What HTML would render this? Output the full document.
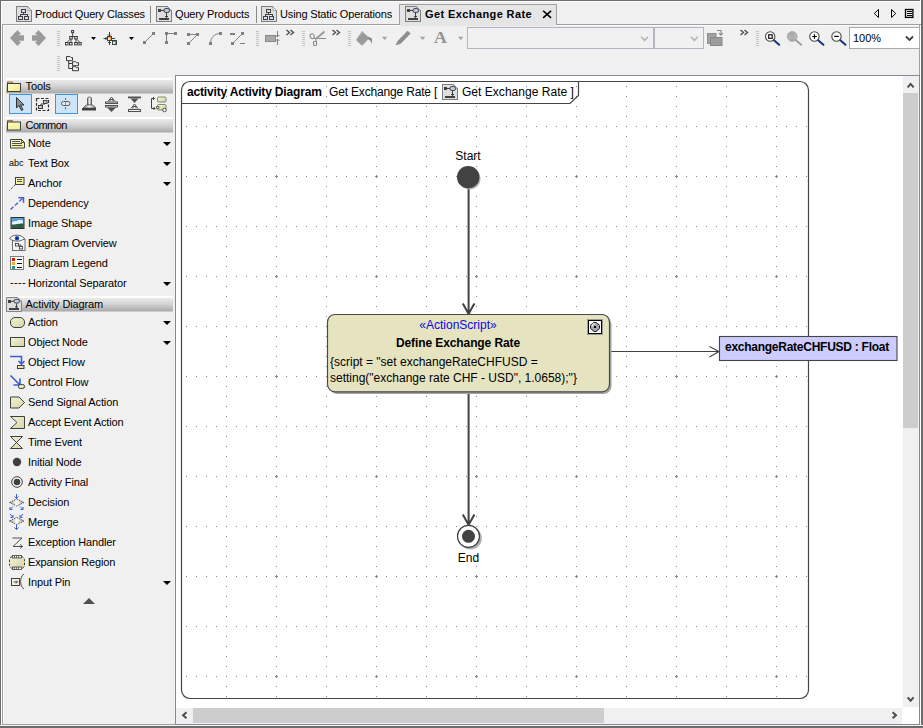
<!DOCTYPE html>
<html><head><meta charset="utf-8"><title>Get Exchange Rate</title>
<style>
*{box-sizing:border-box;margin:0;padding:0}
html,body{width:923px;height:728px;overflow:hidden;background:#f0f0f0}
body{position:relative;font-family:"Liberation Sans",sans-serif;font-size:11.5px;color:#000}
.a{position:absolute}
.t{position:absolute;white-space:nowrap;line-height:14px;height:14px}
svg{position:absolute;overflow:visible}
/* window borders */
#bt{left:0;top:0;width:923px;height:2px;background:#fff;border-top:1px solid #6e6e6e}
#bl{left:0;top:1px;width:2px;height:728px;background:#fff;border-left:1px solid #6e6e6e}
#br{left:920px;top:0;width:3px;height:728px;background:#6c6c6c;border-left:1px solid #fff}
#bb{left:0;top:725px;width:923px;height:3px;background:#6c6c6c;border-top:1px solid #f4f4f4}
#tabline{left:2px;top:24px;width:919px;height:1px;background:#a0a0a0}
#paneL{left:2px;top:24px;width:1px;height:701px;background:#a0a0a0}
#paneR{left:919px;top:24px;width:1px;height:701px;background:#a0a0a0}
#hiT{left:3px;top:25px;width:916px;height:1px;background:#fbfbfb}
#hiL{left:3px;top:25px;width:1px;height:699px;background:#fbfbfb}
#paneB{left:2px;top:724px;width:918px;height:1px;background:#a0a0a0}
/* tabs */
.tab{top:7px;font-size:11px;letter-spacing:-0.15px}
#atab{left:399px;top:4px;width:158px;height:21px;border:1px solid #a0a0a0;border-bottom:none;background:#e5e5e5}
.sep{top:6px;width:1px;height:17px;background:#8a8a8a}
/* palette */
.hdr{left:6px;width:167px;height:16px;background:linear-gradient(#ffffff 0,#ffffff 1.8px,#e9e9e9 2.2px,#d4d4d4 8px,#a9a9a9 15.4px,#f0f0f0 15.6px)}
.row{left:28px;font-size:11px;letter-spacing:-0.12px}
.dd{left:163px;width:0;height:0;border-left:4px solid transparent;border-right:4px solid transparent;border-top:4px solid #000}
.sel{background:#cce4f7;border:1px solid #3c96e0}
/* canvas */
#canvas{left:175px;top:75px;width:745px;height:650px;background:#fff;border:1px solid #828a96}
</style></head><body>
<div class="a" id="bt"></div><div class="a" id="bl"></div><div class="a" id="br"></div><div class="a" id="bb"></div>
<div class="a" id="tabline"></div><div class="a" id="paneL"></div><div class="a" id="paneR"></div><div class="a" id="paneB"></div><div class="a" id="hiT"></div><div class="a" id="hiL"></div>

<!-- TABS -->
<div class="a" id="atab"></div><div class="a" style="left:400px;top:25px;width:156px;height:1px;background:#e5e5e5"></div>
<div class="t tab" style="left:35px">Product Query Classes</div>
<div class="a sep" style="left:150px"></div>
<div class="t tab" style="left:175px">Query Products</div>
<div class="a sep" style="left:256px"></div>
<div class="t tab" style="left:280px">Using Static Operations</div>
<div class="t tab" style="left:425px;font-weight:bold;letter-spacing:0.4px">Get Exchange Rate</div>
<svg class="a" style="left:0;top:0" width="0" height="0"><defs>
<g id="icls" shape-rendering="crispEdges">
<path d="M0.500 0.500h11l4 4v11h-15z" fill="#dedede" stroke="#7e7e7e"/>
<path d="M12 1v3.500h3.500z" fill="#fff" stroke="#7e7e7e" stroke-width="0.600" shape-rendering="auto"/>
<path d="M7.500 7v2M4.500 10v-1.500h6.500v1.500" fill="none" stroke="#404040"/>
<rect x="5.500" y="3.500" width="4" height="3" fill="#d0dcf8" stroke="#404040"/>
<rect x="2.500" y="10.500" width="4" height="3" fill="#d0dcf8" stroke="#404040"/>
<rect x="8.500" y="10.500" width="4" height="3" fill="#d0dcf8" stroke="#404040"/>
</g>
<g id="iact" shape-rendering="crispEdges">
<path d="M0.500 0.500h11l4 4v11h-15z" fill="#dedede" stroke="#7e7e7e"/>
<path d="M12 1v3.500h3.500z" fill="#fff" stroke="#7e7e7e" stroke-width="0.600" shape-rendering="auto"/>
<rect x="2" y="3" width="3" height="3" fill="#404040"/>
<path d="M5 4.500h3M10.500 7v5M9 10.500h3" stroke="#404040" fill="none"/>
<rect x="3" y="12" width="10" height="2" fill="#404040"/>
<rect x="8" y="2.500" width="5.500" height="4" rx="1.800" fill="#b8c8ee" stroke="#404040" shape-rendering="auto"/>
</g>
</defs></svg>
<svg class="a" style="left:16px;top:6px" width="16" height="16"><use href="#icls"/></svg>
<svg class="a" style="left:156px;top:6px" width="16" height="16"><use href="#iact"/></svg>
<svg class="a" style="left:261px;top:6px" width="16" height="16"><use href="#icls"/></svg>
<svg class="a" style="left:405px;top:6px" width="16" height="16"><use href="#iact"/></svg>


<!-- TOOLBAR -->
<svg class="a" style="left:0;top:0" width="923" height="76" viewBox="0 0 923 76" shape-rendering="crispEdges">
<defs>
<g id="grip" fill="#c4c4c4"><rect x="0" y="0" width="3" height="1"/><rect x="0" y="2" width="3" height="1"/><rect x="0" y="4" width="3" height="1"/><rect x="0" y="6" width="3" height="1"/><rect x="0" y="8" width="3" height="1"/><rect x="0" y="10" width="3" height="1"/><rect x="0" y="12" width="3" height="1"/><rect x="0" y="14" width="3" height="1"/></g>
<path id="dda" d="M0 0h5l-2.500 3z"/><path id="ddg" d="M0 0h5.400l-2.700 3.300z" fill="#a2a2a2"/>
<path id="chev" d="M0 0l3 2.5l-3 2.5M4 0l3 2.5l-3 2.5" fill="none" stroke="#505050" stroke-width="1.400" shape-rendering="auto"/>
<g id="mag" shape-rendering="auto"><path d="M9.200 9.300l5.800 5" stroke="#143480" stroke-width="2" stroke-linecap="round"/><circle cx="6" cy="6" r="4.700" fill="#fdfdfd" stroke="#4a4a4a" stroke-width="1.100"/></g>
</defs>
<!-- back / forward -->
<g fill="#9a9a9a" shape-rendering="auto">
<path d="M10 38l7.500-8l3.500 3.700l-2.500 1.600h5.500v5.400h-5.500l2.500 1.600l-3.500 3.700z"/>
<path d="M46 38l-7.500-8l-3.500 3.700l2.500 1.600h-5.500v5.400h5.500l-2.500 1.600l3.500 3.700z"/>
</g>
<use href="#grip" x="57" y="31"/>
<use href="#grip" x="57" y="56"/>
<use href="#grip" x="256" y="31"/>
<use href="#grip" x="302" y="31"/>
<use href="#grip" x="348" y="31"/>
<use href="#grip" x="756" y="31"/>
<!-- tree layout icon -->
<g fill="#f0f0f0" stroke="#3a3a3a" stroke-width="1" shape-rendering="auto">
<path d="M72.600 33v3.500M71 36.500h5M70 39.500l-3 3M77 39.500l3 3M71 39v3.500M76 39v3.500" fill="none" stroke-width="0.900"/>
<rect x="71.600" y="30.500" width="2" height="2.200"/>
<rect x="69.700" y="36.500" width="2.600" height="2.500"/><rect x="74.700" y="36.500" width="2.600" height="2.500"/>
<rect x="65.500" y="42.500" width="2.500" height="2.400"/><rect x="69.500" y="42.500" width="2.600" height="2.400"/><rect x="74.700" y="42.500" width="2.600" height="2.400"/><rect x="78.900" y="42.500" width="2.300" height="2.400"/>
</g>
<use href="#dda" x="91" y="37" fill="#000" shape-rendering="auto"/>
<!-- align icon -->
<g stroke="#404040" stroke-width="1" fill="none">
<path d="M109.500 32v4.500M108 34.500l1.500 1.500l1.500-1.500M109.500 45v-4M108 43l1.500-1.500l1.500 1.500M103.500 38.500h4M105.500 37l1.500 1.500l-1.500 1.500M112 38.500h3" shape-rendering="auto"/>
<rect x="107.500" y="36.500" width="4" height="4" fill="#f0a040"/>
<rect x="112.500" y="40.500" width="4" height="4" fill="#40b060"/>
</g>
<rect x="108" y="38" width="2" height="2" fill="#fde8c8"/><rect x="113" y="42" width="2" height="2" fill="#e0f5e4"/>
<use href="#dda" x="129" y="37" fill="#000" shape-rendering="auto"/>
<!-- path style icons -->
<g fill="#808080" stroke="none">
<rect x="143" y="41" width="3" height="3"/><rect x="152" y="32" width="3" height="3"/>
<rect x="165" y="32" width="3" height="3"/><rect x="174" y="32" width="3" height="3"/><rect x="165" y="41" width="3" height="3"/>
<rect x="187" y="33" width="3" height="3"/><rect x="196" y="33" width="3" height="3"/><rect x="187" y="42" width="3" height="3"/>
<rect x="209" y="42" width="3" height="3"/><rect x="219" y="32" width="3" height="3"/>
<rect x="230" y="33" width="5" height="1.500"/><rect x="241" y="32" width="3" height="3"/><rect x="231" y="42" width="3" height="3"/><rect x="240" y="42.500" width="5" height="1.500"/>
</g>
<g stroke="#808080" stroke-width="1" fill="none" shape-rendering="auto">
<path d="M144.500 42.500l9-9M166.500 42.500v-9h9M188.500 34.500h9l-9 9M210.500 43.500c0-6 4-10 10-10M232.500 43.500l10-10"/>
</g>
<!-- resize rect icon -->
<rect x="265.500" y="35.500" width="10" height="6" fill="#a8a8a8" stroke="#8a8a8a"/>
<g stroke="#808080" fill="none" shape-rendering="auto"><path d="M277.500 31v6M275.500 35l2 2l2-2M277.500 45v-6M275.500 41l2-2l2 2"/></g>
<use href="#chev" x="286.500" y="30"/>
<!-- scissors -->
<g stroke="#8a8a8a" fill="none" stroke-width="1.100" shape-rendering="auto">
<ellipse cx="312.200" cy="36.200" rx="2" ry="2.500" transform="rotate(-25 312.200 36.200)"/>
<rect x="313.500" y="41.500" width="3" height="4" rx="0.800"/>
<path d="M314 38.200l2 0.400v3M316 38.500h10"/>
<path d="M316.300 38.500l8.200-7" stroke="#9c9c9c" stroke-width="2"/>
</g>
<use href="#chev" x="332.500" y="30"/>
<!-- bucket -->
<g shape-rendering="auto">
<path d="M362 31.300l7.500 6.700l-7.500 7.800l-6-5.800z" fill="#9a9a9a"/>
<path d="M361 34.500c-0.500-3.500 2-3.500 2.500-1.500" fill="none" stroke="#c4c4c4" stroke-width="1.100"/>
<path d="M368 36.500l4 2v5.500l-1.800-3.500l-2-1z" fill="#8c8c8c"/>
</g>
<use href="#ddg" x="381.900" y="36.700" shape-rendering="auto"/>
<!-- pencil -->
<g shape-rendering="auto"><path d="M396.200 44.800l1.800-3.800l9.600-10l2.600 2.600l-9.600 9.800z" fill="#8e8e8e" stroke="#808080" stroke-width="0.600"/></g>
<use href="#ddg" x="419.900" y="36.700" shape-rendering="auto"/>
<text x="0" y="0" transform="translate(433.800 42.800) scale(1.150 1)" font-family="Liberation Serif,serif" font-size="16" font-weight="bold" fill="#949494" shape-rendering="auto">A</text>
<use href="#ddg" x="458" y="36.700" shape-rendering="auto"/>
<!-- combos -->
<rect x="467.500" y="27.500" width="186" height="21" fill="#f1f1f1" stroke="#b2b6c0"/>
<rect x="654.500" y="27.500" width="49" height="21" fill="#f1f1f1" stroke="#b2b6c0"/>
<g stroke="#b4b4b4" stroke-width="1.600" fill="none" shape-rendering="auto"><path d="M641.200 36.800l3.400 3.800l3.400-3.800M691 36.800l3.400 3.800l3.400-3.800"/></g>
<!-- copy icon -->
<g shape-rendering="auto"><rect x="707.500" y="33.500" width="8.500" height="10" fill="#a2a2a2" stroke="#8e8e8e"/><rect x="710.500" y="37.500" width="11.500" height="8" fill="#9c9c9c" stroke="#888"/>
<path d="M717 30.500h4v4.500M719 33l2 2.200l2-2.200" fill="none" stroke="#8a8a8a" stroke-width="1.100"/></g>
<use href="#chev" x="740.500" y="30"/>
<!-- zoom icons -->
<use href="#mag" x="764.200" y="30.500"/>
<rect x="768.700" y="34.800" width="3.500" height="3.500" fill="none" stroke="#000" stroke-width="1.100" shape-rendering="auto"/>
<g shape-rendering="auto"><path d="M795.400 39.800l5.800 5" stroke="#a0a0a0" stroke-width="2" stroke-linecap="round"/><circle cx="792.200" cy="36.500" r="4.900" fill="#aaaaaa" stroke="#a4a4a4" stroke-width="0.800"/><text x="792.200" y="38.800" text-anchor="middle" font-family="Liberation Sans,sans-serif" font-size="6" font-weight="bold" fill="#c4c4c4">1:1</text></g>
<use href="#mag" x="808.400" y="30.500"/>
<path d="M812.200 36.500h4.500M814.450 34.300v4.500" stroke="#000" stroke-width="1.200" fill="none" shape-rendering="auto"/>
<use href="#mag" x="830.500" y="30.500"/>
<path d="M834.300 36.400h4.500" stroke="#000" stroke-width="1.200" fill="none" shape-rendering="auto"/>
<!-- zoom combo -->
<rect x="849.500" y="27.500" width="70" height="21" fill="#fff" stroke="#a9a9a9"/>
<path d="M906 36.500l3.500 3.500l3.500-3.500" stroke="#404040" stroke-width="1.800" fill="none" shape-rendering="auto"/>
<!-- hierarchy icon row 2 -->
<g fill="#f0f0f0" stroke="#3a3a3a" shape-rendering="auto"><path d="M68.700 60.500v8h3.800M68.700 63.500h3.800" fill="none"/>
<path d="M66.500 56.500h3.500l1 1h1.500v3.200h-6z"/><path d="M72.500 61.700h3l1 1h2v3h-6z"/><path d="M72.500 66.700h3l1 1h2v3h-6z"/></g>
<!-- tab nav icons -->
<g shape-rendering="auto" fill="none" stroke="#000" stroke-width="1"><path d="M878.500 9.500l-4.200 4l4.200 4zM891.500 9.500l4.200 4l-4.200 4z"/><rect x="905.500" y="9.500" width="7.400" height="7.900" stroke-width="1.300"/></g>
<g shape-rendering="crispEdges" fill="#000"><rect x="907" y="11" width="5" height="1"/><rect x="907" y="13" width="5" height="1"/><rect x="907" y="15" width="5" height="1"/></g>
<!-- close x -->
<path d="M543.700 11.300l6.800 6M550.500 11.300l-6.800 6" stroke="#000" stroke-width="1.600" stroke-linecap="square" fill="none" shape-rendering="auto"/>
</svg>
<div class="t" style="left:853px;top:31px;font-size:11px">100%</div>


<!-- PALETTE -->
<div class="a hdr" style="top:78px"></div>
<div class="a hdr" style="top:117px"></div>
<div class="a hdr" style="top:296px"></div>
<div class="t row" style="left:25.500px;top:79px">Tools</div>
<div class="t row" style="left:25.500px;top:118px;letter-spacing:-0.55px">Common</div>
<div class="t row" style="left:25.600px;top:297px">Activity Diagram</div>
<div class="a sel" style="left:9px;top:94px;width:23px;height:20px"></div>
<div class="a sel" style="left:55px;top:94px;width:23px;height:20px"></div>
<div class="t row" style="top:136px">Note</div>
<div class="t row" style="top:156px">Text Box</div>
<div class="t row" style="top:176px">Anchor</div>
<div class="t row" style="top:196px">Dependency</div>
<div class="t row" style="top:216px">Image Shape</div>
<div class="t row" style="top:236px">Diagram Overview</div>
<div class="t row" style="top:256px">Diagram Legend</div>
<div class="t row" style="top:276px">Horizontal Separator</div>
<div class="t row" style="top:315px">Action</div>
<div class="t row" style="top:335px">Object Node</div>
<div class="t row" style="top:355px">Object Flow</div>
<div class="t row" style="top:375px">Control Flow</div>
<div class="t row" style="top:395px">Send Signal Action</div>
<div class="t row" style="top:415px">Accept Event Action</div>
<div class="t row" style="top:435px">Time Event</div>
<div class="t row" style="top:455px">Initial Node</div>
<div class="t row" style="top:475px">Activity Final</div>
<div class="t row" style="top:495px">Decision</div>
<div class="t row" style="top:515px">Merge</div>
<div class="t row" style="top:535px">Exception Handler</div>
<div class="t row" style="top:555px">Expansion Region</div>
<div class="t row" style="top:575px">Input Pin</div>
<div class="t row" style="left:9px;top:156px;font-size:9px;letter-spacing:0">abc</div>
<div class="t row" style="left:10px;top:275px;font-size:11px;letter-spacing:0.3px">----</div>
<div class="a dd" style="top:142px"></div>
<div class="a dd" style="top:162px"></div>
<div class="a dd" style="top:182px"></div>
<div class="a dd" style="top:282px"></div>
<div class="a dd" style="top:321px"></div>
<div class="a dd" style="top:341px"></div>
<div class="a dd" style="top:581px"></div>
<div class="a" style="left:83px;top:598px;width:0;height:0;border-left:6px solid transparent;border-right:6px solid transparent;border-bottom:6px solid #505050"></div>
<svg class="a" style="left:0;top:0" width="176" height="620" viewBox="0 0 176 620">
<defs>
<linearGradient id="gy" x1="0" y1="0" x2="1" y2="1"><stop offset="0" stop-color="#ffffc0"/><stop offset="1" stop-color="#f0e890"/></linearGradient>
<linearGradient id="gk" x1="0" y1="0" x2="1" y2="1"><stop offset="0" stop-color="#f4f4d8"/><stop offset="1" stop-color="#d4d4a4"/></linearGradient>
<linearGradient id="gg" x1="0" y1="0" x2="1" y2="0"><stop offset="0" stop-color="#707070"/><stop offset="0.500" stop-color="#f4f4f4"/><stop offset="1" stop-color="#707070"/></linearGradient>
<g id="folder"><path d="M0.500 2.500v-1.500h5v1.500" fill="#eab468" stroke="#806040" stroke-width="0.800"/><rect x="0.500" y="2.500" width="13" height="8" fill="url(#gy)" stroke="#404040"/></g>
</defs>
<use href="#folder" x="7" y="81"/>
<use href="#folder" x="7" y="119.500"/>
<svg x="6" y="297" width="16" height="15" viewBox="0 0 16 16" preserveAspectRatio="none"><use href="#iact"/></svg>
<!-- cursor -->
<path d="M16.500 97.500v10.500l2.500-2.500l2.500 5l1.500-0.800l-2.500-4.700h3.500z" fill="#909090" stroke="#303030" stroke-width="1" stroke-linejoin="round"/>
<!-- dashed select -->
<rect x="36.500" y="98.500" width="12" height="12" fill="none" stroke="#303030" stroke-width="1.200" stroke-dasharray="3 1.500"/>
<path d="M41 107v-3h4" fill="none" stroke="#404040"/>
<rect x="43.500" y="100.500" width="3.500" height="3" fill="#c8c8c8" stroke="#404040"/>
<rect x="38.500" y="105.500" width="4" height="3" fill="#c8c8c8" stroke="#404040"/>
<!-- sticky -->
<path d="M65.500 98v2M65.500 107v2.500" stroke="#707070" fill="none"/>
<rect x="61.500" y="101.500" width="8.500" height="4" rx="2" fill="#e8e8e8" stroke="#606060"/>
<path d="M65.500 102v3" stroke="#909090"/>
<!-- stamp -->
<path d="M87.500 98.500c0-2 4-2 4 0v6.500h-4z" fill="url(#gg)" stroke="#505050" stroke-width="0.800"/>
<path d="M83 108l3-3h7l3 3z" fill="url(#gg)" stroke="#505050" stroke-width="0.600"/>
<rect x="82" y="108" width="14" height="2.500" fill="#404040"/>
<!-- expand -->
<g stroke="#505050" fill="none"><rect x="105.500" y="102" width="12" height="1.500" fill="#f0f0f0"/><rect x="105.500" y="105.500" width="12" height="1.500" fill="#f0f0f0"/>
<path d="M108 101.500l3.500-4.500l3.500 4.500M110 101.500v-2h3v2" /></g>
<path d="M107 107.500h9l-4.500 4.500z" fill="#505050"/>
<!-- compress -->
<rect x="128" y="96.500" width="13" height="1.800" fill="#505050"/>
<path d="M130.500 98.500h8l-4 4.500z" fill="#505050"/>
<g stroke="#505050" fill="none"><path d="M131 108.500l3.500-4.500l3.500 4.500M133 108.500v-2h3v2"/><rect x="128.500" y="109.500" width="12" height="2" fill="#f0f0f0"/></g>
<!-- related elements -->
<g stroke="#404040" fill="none"><path d="M154 98.500h-2.500v10h3.500M153 97l1.500 1.500l-1.500 1.500M153.500 107l1.500 1.500l-1.500 1.500"/></g>
<rect x="157.500" y="97" width="8.500" height="5" rx="1" fill="url(#gk)" stroke="#707060" stroke-width="0.800"/>
<rect x="157.500" y="104.500" width="8.500" height="5.500" rx="1" fill="url(#gk)" stroke="#707060" stroke-width="0.800"/>
<rect x="156.500" y="106.500" width="2.500" height="2" fill="#d8d8a8" stroke="#505050" stroke-width="0.700"/>
<circle cx="164.500" cy="110" r="1.800" fill="#fff" stroke="#404040" stroke-width="0.900"/>
<!-- note -->
<path d="M10.500 139.500h11l3 3v5.500h-14z" fill="url(#gy)" stroke="#404040"/>
<path d="M21.500 139.500v3h3" stroke="#404040" fill="none" stroke-width="0.900"/><path d="M12 141.500h8M12 143.500h10M12 145.500h10" stroke="#505050" fill="none" stroke-width="1" shape-rendering="crispEdges"/>
<!-- anchor -->
<rect x="15.500" y="177.500" width="8.500" height="7" fill="url(#gy)" stroke="#404040"/>
<path d="M17 179.500h5M17 181.500h5" stroke="#505050" stroke-width="1" shape-rendering="crispEdges"/>
<path d="M15 185l-5.500 5.500" stroke="#404040" stroke-dasharray="2 1.500"/>
<!-- dependency -->
<path d="M10.500 209.500l12.500-11.500" stroke="#3c5cd8" stroke-width="1.300" stroke-dasharray="4 2" fill="none"/>
<path d="M18.500 197.700h5v5" stroke="#3c5cd8" stroke-width="1.500" fill="none"/>
<!-- image -->
<rect x="11" y="217.500" width="13" height="11" fill="#58a0d8" stroke="#303030"/>
<rect x="11.500" y="224" width="12" height="4" fill="#2c5c48"/>
<path d="M12 222.500c2-2.500 4-0.500 5-1.500s3-1.500 6-0.500v2.500c-3 0-5 1.500-11 1.500z" fill="#e8f4fc"/>
<!-- diagram overview -->
<rect x="12.500" y="239.500" width="12.500" height="11" fill="#f4f4f4" stroke="#707070"/>
<path d="M9.500 238.500c4-4.500 11-4.500 15 0c-4 3.500-11 3.500-15 0z" fill="#fff" stroke="#404040" stroke-width="0.800"/>
<circle cx="17" cy="238.300" r="2.200" fill="#1848d0"/><circle cx="17" cy="238.300" r="0.900" fill="#102060"/>
<rect x="15.500" y="243.500" width="3" height="2.500" fill="#fff" stroke="#404040" stroke-width="0.900"/><rect x="19.500" y="246.500" width="3" height="2.500" fill="#fff" stroke="#404040" stroke-width="0.900"/><path d="M18.500 245h2.500v1.500" stroke="#404040" fill="none" stroke-width="0.900"/>
<!-- legend -->
<rect x="10.500" y="256.500" width="13" height="13" fill="#f8f8f8" stroke="#808080"/>
<rect x="12" y="258" width="3" height="3" fill="#d81414"/><rect x="12" y="262" width="3" height="3" fill="#fca814"/><rect x="12" y="266" width="3" height="3" fill="#149c90"/>
<path d="M16.500 259.500h5.500M16.500 263.500h5.500M16.500 267.500h5.500" stroke="#101010" stroke-width="1" shape-rendering="crispEdges"/>
<!-- action -->
<rect x="10.500" y="317.500" width="14" height="10" rx="4.500" fill="url(#gk)" stroke="#404040"/>
<!-- object node -->
<rect x="10.500" y="337.500" width="14" height="9" fill="url(#gk)" stroke="#404040"/>
<!-- object flow -->
<path d="M10 356.500h11.500v7M18.500 361l3 3l3-3" stroke="#3c5cd8" stroke-width="1.600" fill="none"/>
<rect x="17.500" y="365.500" width="6.500" height="3" fill="url(#gk)" stroke="#404040"/>
<!-- control flow -->
<path d="M10.500 375.500l9.500 9.500M13.500 385h6.500v-6.500" stroke="#3c5cd8" stroke-width="1.600" fill="none"/>
<rect x="18.500" y="384.500" width="6" height="4" rx="1.800" fill="url(#gk)" stroke="#404040"/>
<!-- send signal -->
<path d="M10.500 397h8.500l5.500 5.500l-5.500 5.500h-8.500z" fill="url(#gk)" stroke="#404040"/>
<!-- accept event -->
<path d="M10.500 416.500h14v12h-14l6.500-6z" fill="url(#gk)" stroke="#404040"/>
<!-- time event -->
<path d="M10.500 436.500h12l-12 12h12z" fill="url(#gk)" stroke="#404040" stroke-linejoin="round"/>
<!-- initial -->
<circle cx="17" cy="462" r="4.200" fill="#404040"/>
<!-- final -->
<circle cx="17" cy="482" r="5.300" fill="#f8f8f8" stroke="#404040"/><circle cx="17" cy="482" r="3.300" fill="#404040"/>
<!-- decision -->
<defs><linearGradient id="gd" x1="0" y1="0" x2="1" y2="0"><stop offset="0" stop-color="#a0a0a0"/><stop offset="0.500" stop-color="#ffffff"/><stop offset="1" stop-color="#a0a0a0"/></linearGradient></defs>
<path d="M9.500 502.500l7.200-3.500l7.300 3.500l-7.300 3.500z" fill="url(#gd)" stroke="#404040" stroke-width="0.900" stroke-dasharray="1.600 1"/>
<g stroke="#3c5cd8" fill="none" stroke-width="1"><path d="M16.500 494v4.500M14.500 496.500l2 2l2-2M13 506.500l-3 3M10 507v2.500h2.500M20 506.500l3 3M23 507v2.500h-2.500"/></g>
<!-- merge -->
<path d="M9.500 521l7.200-3.500l7.300 3.500l-7.300 3.500z" fill="url(#gd)" stroke="#404040" stroke-width="0.900" stroke-dasharray="1.600 1"/>
<g stroke="#3c5cd8" fill="none" stroke-width="1"><path d="M16.500 525v4.500M14.500 527.500l2 2l2-2M10 514l3 3.500M10.500 517.500h2.500v-2.500M23 514l-3 3.500M22.500 517.500h-2.500v-2.500"/></g>
<!-- exception handler -->
<path d="M12.500 538h9.500l-9 8.500h9.500M20 544.500l2.500 2l-2.500 2" stroke="#404040" fill="none" stroke-width="0.900"/>
<!-- expansion region -->
<rect x="9.500" y="556.500" width="15" height="12" rx="3.500" fill="url(#gk)" stroke="#404040" stroke-dasharray="2.500 1.500"/>
<rect x="12.500" y="555.500" width="9" height="2.500" fill="#f4f4e0" stroke="#404040" stroke-width="0.800"/><rect x="12.500" y="567" width="9" height="2.500" fill="#f4f4e0" stroke="#404040" stroke-width="0.800"/>
<path d="M14.500 555.500v2.500M16.500 555.500v2.500M18.500 555.500v2.500M14.500 567v2.500M16.500 567v2.500M18.500 567v2.500" stroke="#404040" stroke-width="0.700"/>
<!-- input pin -->
<rect x="11.500" y="578.500" width="8" height="7" fill="#f4f4e0" stroke="#404040"/>
<path d="M13.500 582h4M16 580.500l1.500 1.500l-1.500 1.500" stroke="#404040" fill="none" stroke-width="0.900"/>
<path d="M24 574c-4.500 2.500-4.500 12.500 0 15" stroke="#404040" fill="none" stroke-width="0.900"/>
</svg>



<!-- CANVAS -->
<div class="a" id="canvas"></div>
<svg class="a" style="left:176px;top:76px" width="727" height="631" viewBox="176 76 727 631">
<defs>
<pattern id="grid" x="176" y="76" width="50" height="50" patternUnits="userSpaceOnUse" shape-rendering="crispEdges">
<g fill="#888888"><rect x="0" y="0" width="1" height="1"/><rect x="10" y="0" width="1" height="1"/><rect x="20" y="0" width="1" height="1"/><rect x="30" y="0" width="1" height="1"/><rect x="40" y="0" width="1" height="1"/>
<rect x="0" y="10" width="1" height="1"/><rect x="0" y="20" width="1" height="1"/><rect x="0" y="30" width="1" height="1"/><rect x="0" y="40" width="1" height="1"/></g>
</pattern>
<pattern id="plus" x="225" y="125" width="100" height="100" patternUnits="userSpaceOnUse" shape-rendering="crispEdges">
<g fill="#888888"><rect x="50" y="51" width="3" height="1"/><rect x="51" y="50" width="1" height="3"/></g>
</pattern>
<clipPath id="fclip"><rect x="182" y="82" width="626" height="616" rx="9"/></clipPath>
<linearGradient id="gact" x1="0" y1="0" x2="1" y2="0"><stop offset="0" stop-color="#e7e5c1"/><stop offset="1" stop-color="#e5e3bd"/></linearGradient>
</defs>
<g clip-path="url(#fclip)"><rect x="181" y="81" width="628" height="618" fill="url(#grid)"/><rect x="181" y="81" width="628" height="618" fill="url(#plus)"/></g>
<!-- frame -->
<rect x="181.500" y="81.500" width="627" height="617" rx="8.500" fill="none" stroke="#454545" stroke-width="1.200"/>
<path d="M181.500 103.500h388.500l8.500-8v-14" fill="none" stroke="#454545" stroke-width="1.200"/>
<svg x="442" y="84" width="16" height="16"><use href="#iact"/></svg>
<!-- flows -->
<g stroke="#424242" stroke-width="2" fill="none">
<path d="M468.600 188v126M462.800 303.500l5.800 10.500l5.800-10.500"/>
<path d="M468.600 392v132M462.800 514.500l5.800 10.500l5.800-10.500"/>
</g>
<path d="M610 351.500h108.500M709.500 346.500l9.500 5l-9.500 5.500" stroke="#424242" stroke-width="1.100" fill="none"/>
<!-- start -->
<circle cx="469.700" cy="178.700" r="10.800" fill="#b4b4b4"/>
<circle cx="468.200" cy="177.200" r="11.200" fill="#424242"/>
<!-- end -->
<circle cx="470.500" cy="538.300" r="11.300" fill="#b0b0b0"/>
<circle cx="468.500" cy="536.300" r="11" fill="#fff" stroke="#424242" stroke-width="1.200"/>
<circle cx="468.500" cy="536.300" r="6.500" fill="#424242"/>
<!-- action -->
<rect x="329.500" y="316.500" width="282" height="77.500" rx="8" fill="#a4a4a4"/>
<rect x="327.500" y="314.500" width="282" height="77.300" rx="7.500" fill="#e6e4c0" stroke="#4a4a4a" stroke-width="1.200"/>
<rect x="587" y="319" width="16" height="16" fill="#9c9c94"/><rect x="588" y="320" width="14" height="14" fill="#000"/><rect x="589" y="321" width="12" height="12" fill="#fff"/>
<path d="M593.700 322.400h2.600l0.600 1.100l1.500 0.600l1.100 1.500v2.600l-1.100 1.600l-1.500 0.600l-0.600 1.100h-2.600l-0.600-1.100l-1.500-0.600l-1.100-1.600v-2.600l1.100-1.500l1.500-0.600z" fill="#a6a6a6" stroke="#1c1c1c" stroke-width="1" stroke-linejoin="round"/><path d="M591.800 326.500l1.200-2.300l2.200-0.700" stroke="#f0f0f0" stroke-width="1.200" fill="none"/><rect x="594" y="326" width="2" height="2" fill="#000"/>
<!-- object node -->
<rect x="719.500" y="336.500" width="177.500" height="24" fill="#ccccff" stroke="#454545" stroke-width="1.100"/>
<g font-family="Liberation Sans, sans-serif" font-size="12" fill="#000">
<text x="187" y="96" font-weight="bold" letter-spacing="-0.170">activity Activity Diagram</text>
<text x="329" y="96" letter-spacing="-0.170">Get Exchange Rate [</text>
<text x="462" y="96" letter-spacing="0.030">Get Exchange Rate ]</text>
<text x="468" y="160" text-anchor="middle">Start</text>
<text x="468.500" y="562" text-anchor="middle">End</text>
<text x="458" y="329" text-anchor="middle" fill="#0808f0">«ActionScript»</text>
<text x="458" y="347" text-anchor="middle" font-weight="bold" letter-spacing="-0.100">Define Exchange Rate</text>
<text x="330" y="366">{script = "set exchangeRateCHFUSD =</text>
<text x="330" y="382">setting("exchange rate CHF - USD", 1.0658);"}</text>
<text x="725" y="351" font-weight="bold" letter-spacing="-0.260">exchangeRateCHFUSD : Float</text>
</g>
</svg>


<!-- SCROLLBARS -->
<div class="a" style="left:903px;top:76px;width:16px;height:631px;background:#f0f0f0"></div>
<div class="a" style="left:903px;top:93px;width:15px;height:335px;background:#cdcdcd"></div>
<div class="a" style="left:176px;top:708px;width:726px;height:16px;background:#f0f0f0"></div>
<div class="a" style="left:193px;top:708px;width:411px;height:15px;background:#cdcdcd"></div>
<svg class="a" style="left:0;top:0" width="923" height="728" viewBox="0 0 923 728"><g fill="none" stroke="#4c4c4c" stroke-width="2">
<path d="M907.600 87.300l3-3.400l3 3.400"/><path d="M907.600 697.300l3 3.400l3-3.400"/><path d="M186.500 712.300l-3.400 3l3.400 3"/><path d="M892.600 712.300l3.400 3l-3.400 3"/>
</g></svg>

</body></html>
